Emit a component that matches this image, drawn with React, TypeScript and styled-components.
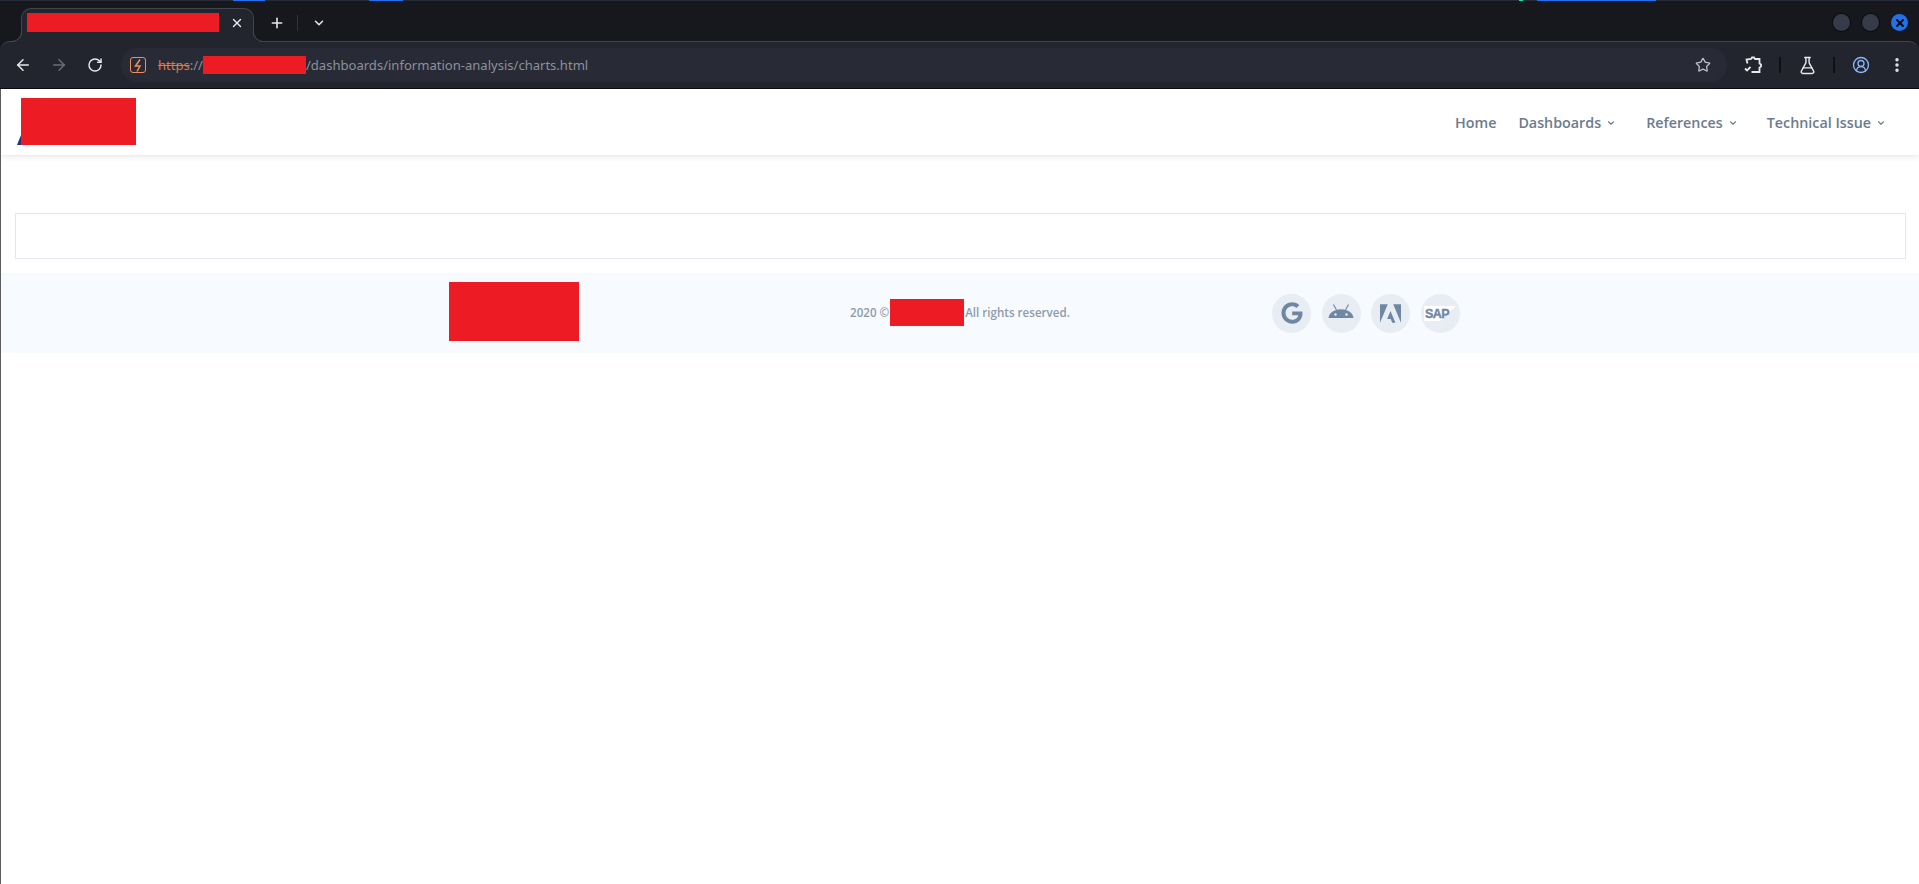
import styled, { createGlobalStyle } from 'styled-components';
import { ArrowLeft, ArrowRight, ChevronDown, EllipsisVertical, FlaskConical, CircleUserRound, Plus, RotateCw, Star, X } from 'lucide-react';
import { FaGoogle } from 'react-icons/fa';
import { SiAdobe } from 'react-icons/si';

const GlobalStyle = createGlobalStyle`
  html, body {
    margin: 0;
    padding: 0;
    background: #fff;
  }
  body {
    font-family: 'Open Sans', 'Liberation Sans', sans-serif;
    overflow: hidden;
  }
  * {
    box-sizing: border-box;
  }
`;

const Window = styled.div`
  width: 1919px;
  height: 884px;
  display: flex;
  flex-direction: column;
  overflow: hidden;
`;

const BrowserFrame = styled.div`
  background: #16181d;
  flex: none;
`;

const WallpaperEdge = styled.div`
  height: 1px;
  background: linear-gradient(
    to right,
    #262a36 233px,
    #1f6fee 233px,
    #1f6fee 265px,
    #262a36 265px,
    #262a36 369px,
    #1f6fee 369px,
    #1f6fee 403px,
    #262a36 403px,
    #262a36 1519px,
    #12e0b0 1519px,
    #12e0b0 1523px,
    #262a36 1523px,
    #262a36 1537px,
    #1f6fee 1537px,
    #1f6fee 1656px,
    #262a36 1656px
  );
`;

const TabStrip = styled.div`
  height: 40px;
  padding: 7px 11px 0 21px;
  display: flex;
  align-items: flex-start;
`;

const Tab = styled.div`
  position: relative;
  z-index: 1;
  width: 233px;
  height: 34px;
  padding: 4px 0 0 5px;
  display: flex;
  align-items: flex-start;
  background: #22252e;
  border: 1px solid #42454d;
  border-bottom: none;
  border-radius: 10px 10px 0 0;
  color: #e6e8ec;

  &::before,
  &::after {
    content: '';
    position: absolute;
    bottom: 0;
    width: 10px;
    height: 10px;
  }

  &::before {
    left: -11px;
    border-right: 1px solid #42454d;
    border-bottom: 1px solid #42454d;
    border-bottom-right-radius: 10px;
    box-shadow: 4px 4px 0 #22252e;
  }

  &::after {
    right: -11px;
    border-left: 1px solid #42454d;
    border-bottom: 1px solid #42454d;
    border-bottom-left-radius: 10px;
    box-shadow: -4px 4px 0 #22252e;
  }
`;

const Redacted = styled.div<{ $w: number; $h: number }>`
  width: ${(p) => p.$w}px;
  height: ${(p) => p.$h}px;
  background: #ed1c24;
  flex: none;
`;

const TabClose = styled.span`
  margin-left: 11px;
  height: 19px;
  display: flex;
  align-items: center;
`;

const StripButton = styled.span<{ $ml: number }>`
  margin-left: ${(p) => p.$ml}px;
  margin-top: 7px;
  height: 16px;
  display: flex;
  align-items: center;
  color: #e6e8ec;
`;

const StripDivider = styled.span`
  margin-left: 12px;
  margin-top: 7px;
  width: 1px;
  height: 16px;
  background: #30333b;
`;

const WindowControls = styled.div`
  margin-left: auto;
  margin-top: 6px;
  display: flex;
  gap: 12px;
`;

const WindowDot = styled.span<{ $active?: boolean }>`
  width: 17px;
  height: 17px;
  border-radius: 50%;
  display: flex;
  align-items: center;
  justify-content: center;
  background: ${(p) => (p.$active ? '#2470e8' : '#363b49')};
  box-shadow: 0 0 0 1px ${(p) => (p.$active ? 'transparent' : '#0c0d10')};
  color: #0a0c12;
`;

const Toolbar = styled.div`
  height: 48px;
  padding: 0 6px 0 5px;
  display: flex;
  align-items: center;
  background: #22252e;
  border-top: 1px solid #42454d;
  border-bottom: 1px solid #08090b;
  border-radius: 10px 10px 0 0;
`;

const NavButton = styled.span<{ $color?: string; $w?: number; $ml?: number }>`
  width: ${(p) => p.$w ?? 36}px;
  height: 34px;
  margin-left: ${(p) => p.$ml ?? 0}px;
  display: flex;
  align-items: center;
  justify-content: center;
  color: ${(p) => p.$color ?? '#e6e8ec'};
  flex: none;
`;

const Omnibox = styled.div`
  margin-left: 8px;
  width: 1606px;
  height: 34px;
  padding: 0 16px 0 9px;
  display: flex;
  align-items: center;
  background: #282b36;
  border-radius: 17px;
  font-family: 'Noto Sans', 'Liberation Sans', sans-serif;
  font-size: 13.05px;
  color: #8d909b;
`;

const SecurityChip = styled.span`
  width: 16px;
  height: 16px;
  margin-right: 12px;
  display: flex;
  align-items: center;
  justify-content: center;
  border: 1.5px solid #ea9063;
  border-radius: 3px;
  flex: none;
`;

const Scheme = styled.span`
  color: #d9794f;
  text-decoration: line-through;
`;

const StarSlot = styled.span`
  margin-left: auto;
  display: flex;
  color: #b9bcc4;
`;

const ActionDivider = styled.span`
  width: 2px;
  height: 16px;
  margin: 0 10px;
  background: #0e1014;
  flex: none;
`;

const Page = styled.div`
  flex: 1;
  display: flex;
  flex-direction: column;
  background: #fff;
  border-left: 1px solid #5d5d5d;
`;

const Navbar = styled.header`
  height: 66px;
  padding: 0 33px 0 20px;
  display: flex;
  align-items: center;
  justify-content: space-between;
  background: #fff;
  box-shadow: 0 1px 6px rgba(82, 63, 105, 0.16);
`;

const Logo = styled.div`
  position: relative;
  margin-bottom: 1px;

  &::before {
    content: '';
    position: absolute;
    left: -4px;
    bottom: 0;
    border-style: solid;
    border-width: 0 0 10px 4px;
    border-color: transparent transparent #24396f transparent;
  }
`;

const NavMenu = styled.nav`
  margin-top: 1px;
  display: flex;
  align-items: center;
`;

const NavLink = styled.a<{ $ml: number }>`
  margin-left: ${(p) => p.$ml}px;
  display: flex;
  align-items: center;
  gap: 5px;
  font-size: 14.3px;
  font-weight: 600;
  line-height: 20px;
  color: #6b7b8f;
`;

const Card = styled.div`
  height: 46px;
  margin: 58px 13px 0 14px;
  background: #fff;
  border: 1px solid #e7e5f2;
`;

const Footer = styled.footer`
  height: 80px;
  margin-top: 14px;
  padding-left: 448px;
  display: grid;
  grid-template-columns: 401px 422px auto;
  align-items: center;
  background: #f7faff;
`;

const FooterLogo = styled.div`
  margin-bottom: 4px;
`;

const Copyright = styled.div`
  margin-bottom: 1px;
  display: flex;
  align-items: center;
  gap: 1px;
  font-size: 11.6px;
  font-weight: 600;
  color: #8f9bab;
`;

const CopyrightText = styled.span`
  margin-top: -1px;
`;

const Brands = styled.div`
  display: flex;
  gap: 10.5px;
`;

const Brand = styled.span`
  width: 39px;
  height: 39px;
  border-radius: 50%;
  display: flex;
  align-items: center;
  justify-content: center;
  background: #e8edf3;
  color: #7087a3;
`;

const AndroidMark = styled.svg`
  margin-bottom: 4px;
`;

const SapLabel = styled.text`
  font-family: 'Liberation Sans', sans-serif;
  font-size: 12.5px;
  font-weight: 700;
  letter-spacing: -0.5px;
  fill: #7087a3;
  stroke: #7087a3;
  stroke-width: 0.4px;
`;

function App() {
  return (
    <Window>
      <GlobalStyle />
      <BrowserFrame>
        <WallpaperEdge />
        <TabStrip>
          <Tab>
            <Redacted $w={192} $h={19} />
            <TabClose>
              <X size={14} strokeWidth={2.4} />
            </TabClose>
          </Tab>
          <StripButton $ml={15}>
            <Plus size={16} strokeWidth={2.4} />
          </StripButton>
          <StripDivider />
          <StripButton $ml={14}>
            <ChevronDown size={14} strokeWidth={2.6} />
          </StripButton>
          <WindowControls>
            <WindowDot />
            <WindowDot />
            <WindowDot $active>
              <X size={12} strokeWidth={4} />
            </WindowDot>
          </WindowControls>
        </TabStrip>
        <Toolbar>
          <NavButton>
            <ArrowLeft size={18} strokeWidth={2} />
          </NavButton>
          <NavButton $color="#6a6d75">
            <ArrowRight size={18} strokeWidth={2} />
          </NavButton>
          <NavButton>
            <RotateCw size={16} strokeWidth={2.2} />
          </NavButton>
          <Omnibox>
            <SecurityChip>
              <svg width="11" height="13" viewBox="0 0 11 13">
                <path d="M7 0.5 2.5 7H7L4 12.5" fill="none" stroke="#ea9063" strokeWidth="1.5" />
              </svg>
            </SecurityChip>
            <Scheme>https</Scheme>
            <span>://</span>
            <Redacted $w={103} $h={18} />
            <span>/dashboards/information-analysis/charts.html</span>
            <StarSlot>
              <Star size={16} strokeWidth={2} />
            </StarSlot>
          </Omnibox>
          <NavButton $w={32} $ml={10}>
            <svg width="20" height="20" viewBox="0 0 20 20" fill="none" stroke="#e6e8ec" strokeWidth="1.8">
              <path d="M4.5 8.5 3.5 4.5 8 4 9 2.5 11 2.5 12 4H16.5V8.5L18 9.5V11.5L16.5 12.5V17H8.5" />
              <path d="M2 13.5 4 15.5 7.5 12" />
            </svg>
          </NavButton>
          <ActionDivider />
          <NavButton $w={32}>
            <FlaskConical size={19} strokeWidth={1.8} />
          </NavButton>
          <ActionDivider />
          <NavButton $w={32} $color="#8ab4f8">
            <CircleUserRound size={18} strokeWidth={1.8} />
          </NavButton>
          <NavButton $w={32} $ml={4}>
            <EllipsisVertical size={18} strokeWidth={2.6} />
          </NavButton>
        </Toolbar>
      </BrowserFrame>
      <Page>
        <Navbar>
          <Logo>
            <Redacted $w={115} $h={47} />
          </Logo>
          <NavMenu>
            <NavLink $ml={0}>Home</NavLink>
            <NavLink $ml={22}>
              Dashboards
              <ChevronDown size={10} strokeWidth={2.6} />
            </NavLink>
            <NavLink $ml={30}>
              References
              <ChevronDown size={10} strokeWidth={2.6} />
            </NavLink>
            <NavLink $ml={29}>
              Technical Issue
              <ChevronDown size={10} strokeWidth={2.6} />
            </NavLink>
          </NavMenu>
        </Navbar>
        <Card />
        <Footer>
          <FooterLogo>
            <Redacted $w={130} $h={59} />
          </FooterLogo>
          <Copyright>
            <CopyrightText>2020 ©</CopyrightText>
            <Redacted $w={74} $h={27} />
            <CopyrightText>All rights reserved.</CopyrightText>
          </Copyright>
          <Brands>
            <Brand>
              <FaGoogle size={22} />
            </Brand>
            <Brand>
              <AndroidMark width="26" height="14" viewBox="0 0 26 14">
                <path d="M0.5 14C1 9 6 5.2 13 5.2S25 9 25.5 14Z" fill="currentColor" />
                <path d="M5.5 0.5 8.5 6M20.5 0.5 17.5 6" stroke="currentColor" strokeWidth="1.1" />
                <circle cx="7.5" cy="10.5" r="1.2" fill="#e8edf3" />
                <circle cx="18.5" cy="10.5" r="1.2" fill="#e8edf3" />
              </AndroidMark>
            </Brand>
            <Brand>
              <SiAdobe size={21} />
            </Brand>
            <Brand>
              <svg width="32" height="15" viewBox="0 0 32 15">
                <polygon points="0,0 32,0 16,15 0,15" fill="#fff" />
                <SapLabel x="1" y="12">
                  SAP
                </SapLabel>
              </svg>
            </Brand>
          </Brands>
        </Footer>
      </Page>
    </Window>
  );
}

export default App;
